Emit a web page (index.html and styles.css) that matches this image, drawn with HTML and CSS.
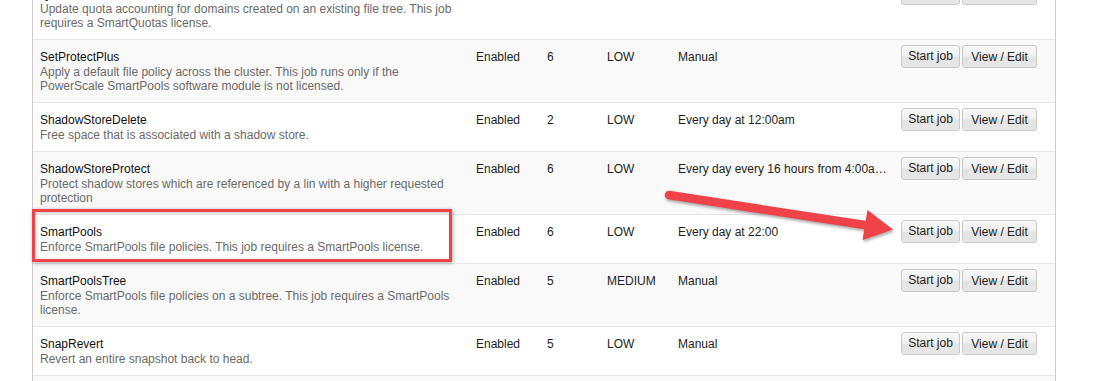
FILE: index.html
```html
<!DOCTYPE html>
<html>
<head>
<meta charset="utf-8">
<title>Job types</title>
<link rel="stylesheet" href="styles.css">
</head>
<body>
<div class="page">
  <div class="jobs">
    <div class="row">
      <div class="cell name"><div class="title">QuotaScan</div><div class="desc">Update quota accounting for domains created on an existing file tree. This job requires a SmartQuotas license.</div></div>
      <div class="cell">Enabled</div><div class="cell">6</div><div class="cell">LOW</div><div class="cell sched">Manual</div>
      <div class="cell actions"><button class="btn start">Start job</button><a class="btn edit">View / Edit</a></div>
    </div>
    <div class="row alt">
      <div class="cell name"><div class="title">SetProtectPlus</div><div class="desc">Apply a default file policy across the cluster. This job runs only if the PowerScale SmartPools software module is not licensed.</div></div>
      <div class="cell">Enabled</div><div class="cell">6</div><div class="cell">LOW</div><div class="cell sched">Manual</div>
      <div class="cell actions"><button class="btn start">Start job</button><a class="btn edit">View / Edit</a></div>
    </div>
    <div class="row">
      <div class="cell name"><div class="title">ShadowStoreDelete</div><div class="desc">Free space that is associated with a shadow store.</div></div>
      <div class="cell">Enabled</div><div class="cell">2</div><div class="cell">LOW</div><div class="cell sched">Every day at 12:00am</div>
      <div class="cell actions"><button class="btn start">Start job</button><a class="btn edit">View / Edit</a></div>
    </div>
    <div class="row alt">
      <div class="cell name"><div class="title">ShadowStoreProtect</div><div class="desc">Protect shadow stores which are referenced by a lin with a higher requested protection</div></div>
      <div class="cell">Enabled</div><div class="cell">6</div><div class="cell">LOW</div><div class="cell sched">Every day every 16 hours from 4:00am to 11:59pm</div>
      <div class="cell actions"><button class="btn start">Start job</button><a class="btn edit">View / Edit</a></div>
    </div>
    <div class="row">
      <div class="cell name"><div class="title">SmartPools</div><div class="desc">Enforce SmartPools file policies. This job requires a SmartPools license.</div></div>
      <div class="cell">Enabled</div><div class="cell">6</div><div class="cell">LOW</div><div class="cell sched">Every day at 22:00</div>
      <div class="cell actions"><button class="btn start">Start job</button><a class="btn edit">View / Edit</a></div>
    </div>
    <div class="row alt">
      <div class="cell name"><div class="title">SmartPoolsTree</div><div class="desc">Enforce SmartPools file policies on a subtree. This job requires a SmartPools license.</div></div>
      <div class="cell">Enabled</div><div class="cell">5</div><div class="cell">MEDIUM</div><div class="cell sched">Manual</div>
      <div class="cell actions"><button class="btn start">Start job</button><a class="btn edit">View / Edit</a></div>
    </div>
    <div class="row">
      <div class="cell name"><div class="title">SnapRevert</div><div class="desc">Revert an entire snapshot back to head.</div></div>
      <div class="cell">Enabled</div><div class="cell">5</div><div class="cell">LOW</div><div class="cell sched">Manual</div>
      <div class="cell actions"><button class="btn start">Start job</button><a class="btn edit">View / Edit</a></div>
    </div>
    <div class="row alt">
      <div class="cell name"><div class="title">SnapshotDelete</div><div class="desc">Free space associated with deleted snapshots.</div></div>
      <div class="cell">Enabled</div><div class="cell">2</div><div class="cell">MEDIUM</div><div class="cell sched">Manual</div>
      <div class="cell actions"><button class="btn start">Start job</button><a class="btn edit">View / Edit</a></div>
    </div>
  </div>

  <div class="highlight"></div>
  <svg class="arrow" width="1106" height="381" viewBox="0 0 1106 381">
    <g class="arrow-shape">
      <line x1="669" y1="195" x2="868" y2="225.5" stroke="#ef4349" stroke-width="8.5" stroke-linecap="round"/>
      <polygon points="893,229.5 867.5,210 862.5,240" fill="#ef4349"/>
    </g>
  </svg>
</div>
</body>
</html>
```

FILE: styles.css
```css
html, body {
  margin: 0;
  padding: 0;
  overflow: hidden;
  background: #ffffff;
}

body {
  font-family: "Liberation Sans", Arial, sans-serif;
  font-size: 12px;
  color: #222222;
}

.page {
  position: relative;
  padding-left: 32px;
  height: 381px;
  overflow: hidden;
}

.jobs {
  width: 1024px;
  box-sizing: border-box;
  border-left: 1px solid #cdc9cd;
  border-right: 1px solid #cdc9cd;
  margin-top: -24px;
}

.row {
  display: grid;
  grid-template-columns: 436px 71px 60px 71px 222px 1fr;
  border-top: 1px solid #e8e8e8;
  background: #ffffff;
}

.row.alt {
  background: #f9f9f9;
}

.cell {
  padding: 10px 7px 9px 7px;
  line-height: 15px;
  color: #1e1e1e;
  white-space: nowrap;
}

.cell.name {
  padding-right: 11px;
  white-space: normal;
}

.title {
  color: #111111;
  line-height: 15px;
}

.desc {
  color: #6a6a6a;
  line-height: 14px;
}

.cell.sched {
  padding-right: 2px;
  overflow: hidden;
  text-overflow: ellipsis;
}

.cell.actions {
  padding: 5px 0 0 8px;
  display: flex;
  align-items: flex-start;
  gap: 2px;
}

.btn {
  display: block;
  box-sizing: border-box;
  height: 23px;
  margin: 0;
  padding: 0;
  border: 1px solid #c9c9c9;
  border-radius: 3px;
  background: linear-gradient(to bottom, #f8f8f8 0%, #f0f0f0 48%, #e4e4e4 52%, #e6e6e6 100%);
  font-family: "Liberation Sans", Arial, sans-serif;
  font-size: 12px;
  color: #222222;
  text-align: center;
  text-decoration: none;
  cursor: pointer;
}

.btn.start {
  width: 59px;
  line-height: 19px;
}

.btn.edit {
  width: 75px;
  line-height: 21px;
  padding-top: 1px;
}

.highlight {
  position: absolute;
  left: 32px;
  top: 209px;
  width: 420px;
  height: 53px;
  box-sizing: border-box;
  border: 3.5px solid #ef4349;
  box-shadow: 1px 1px 4px rgba(0, 0, 0, 0.35), inset 1px 1px 3px rgba(0, 0, 0, 0.2);
  pointer-events: none;
}

.arrow {
  position: absolute;
  left: 0;
  top: 0;
  pointer-events: none;
}

.arrow-shape {
  filter: drop-shadow(1px 2px 1.5px rgba(0, 0, 0, 0.35));
}
```
